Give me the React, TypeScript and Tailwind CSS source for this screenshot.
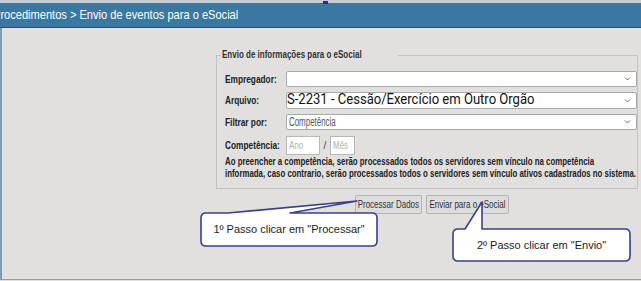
const Chevron = () => (
  <svg width="7" height="5" viewBox="0 0 7 5" className="absolute right-[5px] top-1/2 -translate-y-1/2">
    <path d="M1 1 L3.5 3.5 L6 1" fill="none" stroke="#666" strokeWidth="1" />
  </svg>
);

export default function App() {
  return (
    <div className="relative w-[641px] h-[281px] overflow-hidden bg-[#e1e0de] font-['Liberation_Sans',Arial,sans-serif] text-[#222]">
      {/* top strip */}
      <div className="relative h-[3px] bg-[#cdcdcd]">
        <span className="absolute left-[323px] top-[1px] w-[5px] h-[3px] bg-[#2c1ed6]" />
      </div>

      {/* title bar */}
      <div className="h-[25px] bg-[#3a77a1] border-b border-[#2b4d66] flex items-center overflow-hidden">
        <span className="inline-block -ml-[7px] origin-left scale-x-[0.82] text-[13.5px] leading-none text-white whitespace-nowrap">
          Procedimentos &gt; Envio de eventos para o eSocial
        </span>
      </div>

      {/* body */}
      <div className="h-[252px] border-l-2 border-l-[#7d9bbd] border-b border-b-[#9c9c9c] pl-[214px] pt-[21px]">
        <fieldset className="w-[422px] min-w-0 border border-[#c2c2c2] pl-[8px] pb-[8px] text-[10px]">
          <legend className="-ml-[4px] px-[1px] leading-[12px] font-bold text-[#333]">
            <span className="inline-block origin-left scale-x-[0.8] whitespace-nowrap">Envio de informações para o eSocial</span>
          </legend>

          <div className="mt-[10px] grid grid-cols-[61px_minmax(0,1fr)] items-center gap-y-[5px]">
            <span className="inline-block origin-left scale-x-[0.83] font-bold whitespace-nowrap">Empregador:</span>
            <div className="relative h-[16px] bg-white border border-[#a9a9a9] rounded-[2px]">
              <Chevron />
            </div>

            <span className="inline-block origin-left scale-x-[0.83] font-bold whitespace-nowrap">Arquivo:</span>
            <div className="relative h-[17px] bg-white border border-[#a9a9a9] rounded-[2px] flex items-center overflow-hidden">
              <span className="font-['Roboto',sans-serif] text-[14.5px] leading-none text-[#111] whitespace-nowrap origin-left scale-x-[0.9] inline-block">
                S-2231 - Cessão/Exercício em Outro Órgão
              </span>
              <Chevron />
            </div>

            <span className="inline-block origin-left scale-x-[0.83] font-bold whitespace-nowrap">Filtrar por:</span>
            <div className="relative h-[16px] bg-white border border-[#a9a9a9] rounded-[2px] flex items-center pl-[2px]">
              <span className="inline-block origin-left scale-x-[0.66] text-[12px] leading-none text-[#555] whitespace-nowrap">Competência</span>
              <Chevron />
            </div>

            <span className="inline-block origin-left scale-x-[0.83] font-bold whitespace-nowrap mt-[1px]">Competência:</span>
            <div className="flex items-center h-[19px] mt-[1px]">
              <div className="w-[34px] h-[19px] bg-white border border-[#b8b8b8] flex items-center pl-[2px]">
                <span className="inline-block origin-left scale-x-[0.8] text-[#b0b0b0]">Ano</span>
              </div>
              <span className="w-[10px] text-center text-[#444]">/</span>
              <div className="w-[25px] h-[19px] bg-white border border-[#b8b8b8] flex items-center pl-[2px]">
                <span className="inline-block origin-left scale-x-[0.8] text-[#b0b0b0]">Mês</span>
              </div>
            </div>
          </div>

          <div className="mt-[1px] font-bold leading-[12px] whitespace-nowrap">
            <div className="origin-left scale-x-[0.785]">
              Ao preencher a competência, serão processados todos os servidores sem vínculo na competência
            </div>
            <div className="origin-left scale-x-[0.785]">
              informada, caso contrario, serão processados todos o servidores sem vínculo ativos cadastrados no sistema.
            </div>
          </div>
        </fieldset>

        <div className="mt-[6px] ml-[139px] flex gap-[4px] text-[10px] text-[#333]">
          <button className="w-[67px] h-[19px] bg-[#dcdcdc] border border-[#b3b3b3] rounded-[2px] flex items-center justify-center">
            <span className="inline-block scale-x-[0.8] whitespace-nowrap">Processar Dados</span>
          </button>
          <button className="w-[83px] h-[19px] bg-[#dcdcdc] border border-[#b3b3b3] rounded-[2px] flex items-center justify-center">
            <span className="inline-block scale-x-[0.8] whitespace-nowrap">Enviar para o eSocial</span>
          </button>
        </div>
      </div>

      {/* callouts */}
      <svg className="absolute left-0 top-0" width="641" height="281" viewBox="0 0 641 281">
        <path
          d="M206 213 L228 213 L357 201 L290 213 L372 213 Q377 213 377 218 L377 241 Q377 246 372 246 L206 246 Q201 246 201 241 L201 218 Q201 213 206 213 Z"
          fill="#fff"
          stroke="#3b3f8c"
          strokeWidth="1.6"
          strokeLinejoin="round"
        />
        <path
          d="M458 229 L465 229 L482 202 L482 229 L625 229 Q630 229 630 234 L630 256 Q630 261 625 261 L458 261 Q453 261 453 256 L453 234 Q453 229 458 229 Z"
          fill="#fff"
          stroke="#3b3f8c"
          strokeWidth="1.6"
          strokeLinejoin="round"
        />
      </svg>
      <div className="absolute left-[201px] top-[213px] w-[176px] h-[33px] flex items-center justify-center text-[11px] text-[#222] whitespace-nowrap">
        1º Passo clicar em "Processar"
      </div>
      <div className="absolute left-[453px] top-[229px] w-[177px] h-[32px] flex items-center justify-center text-[11px] text-[#222] whitespace-nowrap">
        2º Passo clicar em "Envio"
      </div>
    </div>
  );
}
